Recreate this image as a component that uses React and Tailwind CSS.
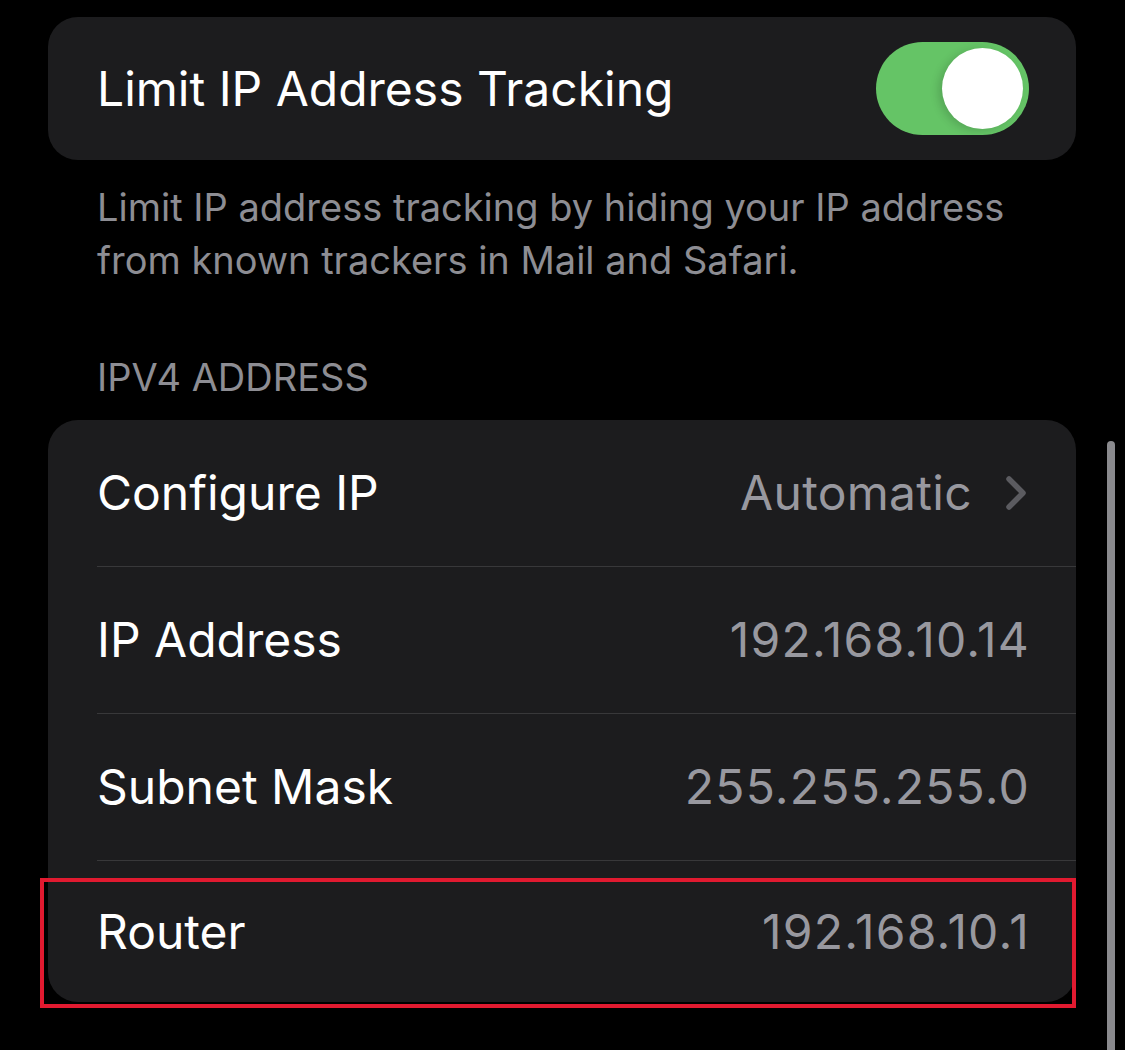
const ROWS = [
  { label: 'Configure IP', value: 'Automatic', chevron: true },
  { label: 'IP Address', value: '192.168.10.14' },
  { label: 'Subnet Mask', value: '255.255.255.0' },
  { label: 'Router', value: '192.168.10.1' },
];

const Toggle = () => (
  <div className="w-[153px] h-[93px] rounded-full bg-[#65c466] flex items-center justify-end pr-[6px]">
    <div className="w-[81px] h-[81px] rounded-full bg-white shadow-[-4px_2px_8px_rgba(0,0,0,0.15)]"></div>
  </div>
);

const Chevron = () => (
  <svg width="22" height="36" viewBox="0 0 22 36" className="ml-[33px]">
    <polyline points="4,4 18,18 4,32" fill="none" stroke="#5b5b60" strokeWidth="5.5" strokeLinecap="round" strokeLinejoin="round" />
  </svg>
);

const App = () => {
  return (
    <div className="relative w-[1125px] h-[1050px] bg-black overflow-hidden font-['Inter','Noto_Sans',sans-serif]">
      <div className="w-[1028px] ml-[48px] pt-[17px]">
        {/* Toggle card */}
        <div className="h-[143px] rounded-[30px] bg-[#1c1c1e] flex items-center justify-between pl-[49px] pr-[47px]">
          <span className="text-[48px] text-white">Limit IP Address Tracking</span>
          <Toggle />
        </div>

        <p className="mt-[21px] pl-[49px] pr-[40px] text-[38px] leading-[53px] text-[#8d8d93]">
          Limit IP address tracking by hiding your IP address from known trackers in Mail and Safari.
        </p>

        <div className="mt-[69px] pl-[49px] text-[38px] leading-[42px] text-[#8d8d93]">IPV4 ADDRESS</div>

        {/* Address card */}
        <div className="mt-[22px] rounded-[30px] bg-[#1c1c1e] overflow-hidden">
          {ROWS.map((row, i) => {
            const last = i === ROWS.length - 1;
            return (
              <div key={row.label} className="pl-[49px]">
                <div className={`flex items-center justify-between pr-[49px] ${last ? 'h-[141px]' : 'h-[147px] border-b border-[#38383a]'}`}>
                  <span className="text-[48px] text-white">{row.label}</span>
                  <span className={`flex items-center text-[48px] text-[#98989f] ${row.chevron ? 'tracking-[0.3px]' : 'tracking-[1.2px] -mr-[3px]'}`}>
                    {row.value}
                    {row.chevron && <Chevron />}
                  </span>
                </div>
              </div>
            );
          })}
        </div>
      </div>

      {/* Highlight box around the Router row */}
      <div className="absolute left-[40px] top-[878px] w-[1036px] h-[130px] border-4 border-[#e11a30]"></div>

      {/* Scroll indicator */}
      <div className="absolute left-[1107px] top-[441px] w-[8px] h-[640px] rounded-full bg-[#8a8a8e]"></div>
    </div>
  );
};

export default App;
